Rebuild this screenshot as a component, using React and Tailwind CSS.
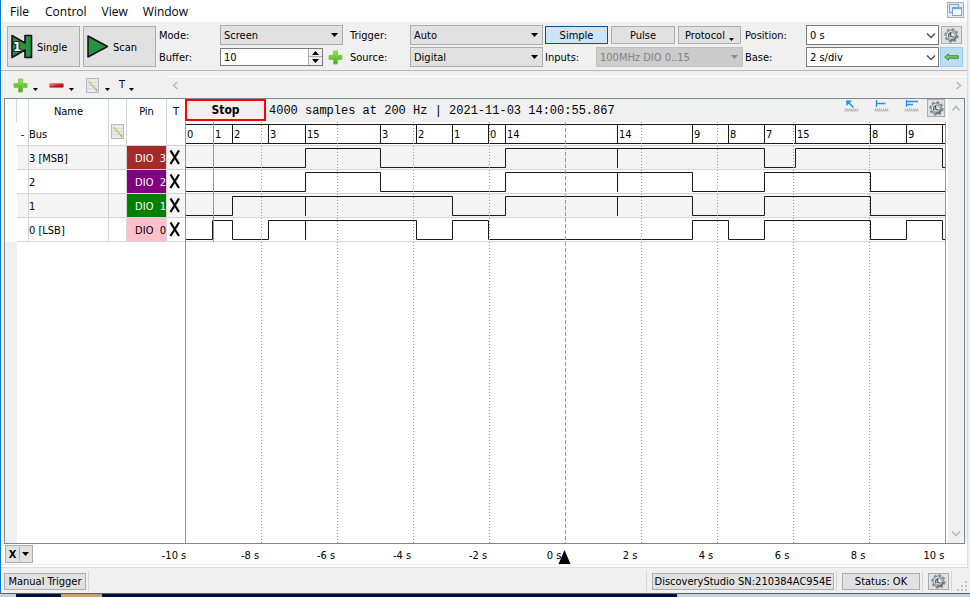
import React from "react";

const SPAN = 761;
const pct = (x) => `${(x / SPAN) * 100}%`;

const GRID = [76, 152, 228, 304, 456, 532, 608, 684];
const AXIS = ["-10 s", "-8 s", "-6 s", "-4 s", "-2 s", "0 s", "2 s", "4 s", "6 s", "8 s", "10 s"];
const BUS = [
  [0, "0"], [28, "1"], [47, "2"], [83, "3"], [120, "15"], [195, "3"], [231, "2"],
  [267, "1"], [303, "0"], [320, "14"], [432, "14"], [507, "9"], [543, "8"],
  [579, "7"], [610, "15"], [685, "8"], [721, "9"], [757, ""],
];
const SIGNALS = [
  { name: "3 [MSB]", pin: 3, cell: "bg-[#a52a2a] text-white", row: "bg-[#f4f4f4]", edges: [120, 195, 320, 579, 610, 757], ticks: [432] },
  { name: "2", pin: 2, cell: "bg-[#800080] text-white", row: "bg-white", edges: [120, 195, 320, 507, 579, 685], ticks: [432] },
  { name: "1", pin: 1, cell: "bg-[#008000] text-white", row: "bg-[#f4f4f4]", edges: [47, 267, 320, 507, 579, 685], ticks: [120, 432] },
  { name: "0 [LSB]", pin: 0, cell: "bg-[#ffc0cb] text-black", row: "bg-white", edges: [27, 47, 83, 231, 267, 303, 507, 543, 579, 685, 721, 757], ticks: [120] },
];

function wavePath(edges, ticks) {
  let y = 21.5;
  let d = `M0 ${y}`;
  edges.forEach((x) => {
    d += `H${x + 0.5}`;
    y = y === 21.5 ? 2.5 : 21.5;
    d += `V${y}`;
  });
  d += `H${SPAN}`;
  ticks.forEach((x) => {
    d += `M${x + 0.5} 2V22`;
  });
  return d;
}

function Caret({ className = "" }) {
  return (
    <svg className={className} width="7" height="4" viewBox="0 0 7 4" aria-hidden="true">
      <path d="M0 0H7L3.5 4Z" fill="currentColor" />
    </svg>
  );
}

function MiniCaret() {
  return (
    <svg className="mt-2 shrink-0" width="5" height="3" viewBox="0 0 5 3" aria-hidden="true">
      <path d="M0 0H5L2.5 3Z" fill="#000" />
    </svg>
  );
}

function Chevron({ dir, className = "" }) {
  const d = { left: "M7.5 2L3.5 5.5L7.5 9", right: "M2.5 2L6.5 5.5L2.5 9", up: "M1.5 7.5L5 3.5L8.5 7.5", down: "M1 3.5L5 7.5L9 3.5" }[dir];
  return (
    <svg className={className} width="10" height="11" viewBox="0 0 10 11" fill="none" stroke="currentColor" strokeWidth="1.5" aria-hidden="true">
      <path d={d} />
    </svg>
  );
}

function Plus() {
  return (
    <svg width="15" height="15" viewBox="0 0 15 15" aria-hidden="true">
      <defs>
        <linearGradient id="plusFill" x1="0" y1="0" x2="0" y2="1">
          <stop offset="0" stopColor="#9be35d" />
          <stop offset="1" stopColor="#43a818" />
        </linearGradient>
      </defs>
      <path d="M5.5 1H9.5V5.5H14V9.5H9.5V14H5.5V9.5H1V5.5H5.5Z" fill="url(#plusFill)" stroke="#7ccb4d" strokeWidth="1" strokeLinejoin="round" />
    </svg>
  );
}

function Minus() {
  return (
    <svg width="15" height="15" viewBox="0 0 15 15" aria-hidden="true">
      <defs>
        <linearGradient id="minusFill" x1="0" y1="0" x2="1" y2="1">
          <stop offset="0" stopColor="#f4a0a0" />
          <stop offset="0.5" stopColor="#d02020" />
          <stop offset="1" stopColor="#8e0808" />
        </linearGradient>
      </defs>
      <rect x="0.5" y="5.5" width="14" height="4" rx="1" fill="url(#minusFill)" stroke="#c86060" strokeWidth="0.6" />
    </svg>
  );
}

function Notepad() {
  return (
    <svg width="13" height="15" viewBox="0 0 13 15" aria-hidden="true">
      <rect x="0.5" y="0.5" width="12" height="14" fill="#e6ebf1" stroke="#b4b9c0" />
      <path d="M1 4.5H12M1 7.5H12M1 10.5H12" stroke="#d0dbe8" />
      <path d="M2.5 3L10 11.5" stroke="#e2c65a" strokeWidth="1.8" />
      <path d="M9.6 11L11 13" stroke="#9a8c66" strokeWidth="1.2" />
    </svg>
  );
}

function Gear() {
  return (
    <svg width="15" height="15" viewBox="0 0 15 15" aria-hidden="true">
      <g transform="translate(7.5 7.5)">
        <g fill="#87919a">
          {[0, 45, 90, 135].map((a) => (
            <rect key={a} x="-1.6" y="-7.2" width="3.2" height="14.4" rx="0.8" transform={`rotate(${a + 12})`} />
          ))}
        </g>
        <circle r="5.3" fill="#a9b1b7" stroke="#7d8790" strokeWidth="0.8" />
        <path d="M-3.9 2A4.4 4.4 0 0 1 0-4.3" fill="none" stroke="#dde3e6" strokeWidth="1.4" />
        <path d="M4.6 0.5A4.6 4.6 0 0 1-1 4.6" fill="none" stroke="#5b6770" strokeWidth="1.3" />
        <circle r="2.6" fill="#eceeef" />
        <path d="M-2.4 1.6A2.9 2.9 0 0 1-0.8-2.7V0.8L2 1.6" fill="none" stroke="#4d5860" strokeWidth="1.2" />
      </g>
    </svg>
  );
}

function Ruler({ kind }) {
  return (
    <svg width="15" height="14" viewBox="0 0 15 14" aria-hidden="true">
      <path d="M1.5 11V9.5M3.5 11V9.5M5.5 11V9.5M7.5 11V9.5M9.5 11V9.5M11.5 11V9.5M13.5 11V9.5" stroke="#aaa" />
      <rect x="0.5" y="10.5" width="14" height="2" fill="#c4c4c4" />
      {kind === "arrow" && (
        <g>
          <path d="M2 1.5H8L2.5 7Z" fill="#1e90ff" />
          <path d="M4 3L9.5 8.5" stroke="#1e90ff" strokeWidth="1.6" />
        </g>
      )}
      <g stroke="#1e90ff" fill="none">
        {kind === "one" && <path d="M2.5 1V8M3 4.5H11.5" strokeWidth="1.3" />}
        {kind === "two" && <path d="M2.5 1V8M3 2.5H14M3 5.5H9" strokeWidth="1.3" />}
      </g>
    </svg>
  );
}

function Combo({ label, value, className = "", flat = false, disabled = false }) {
  const skin = disabled
    ? "border-[#bfbfbf] bg-[#cccccc] text-[#838383]"
    : flat
      ? "border-[#7a7a7a] bg-white text-black"
      : "border-[#adadad] bg-[#e1e1e1] text-black";
  return (
    <div className={`relative h-5 ${className}`}>
      <select aria-label={label} disabled={disabled} className={`block h-5 w-full appearance-none rounded-none border pl-[3px] pt-0.5 opacity-100 ${skin}`}>
        <option>{value}</option>
      </select>
      {flat ? (
        <Chevron dir="down" className="pointer-events-none absolute right-[3px] top-[5px] text-[#555]" />
      ) : (
        <Caret className={`pointer-events-none absolute right-[5px] top-2 ${disabled ? "text-[#8c8c8c]" : "text-black"}`} />
      )}
    </div>
  );
}

const BTN = "flex items-center justify-center border border-[#adadad] bg-[#e1e1e1]";

function CaptureBar() {
  return (
    <div className="flex border-b border-[#b8b8b8] pt-0.5 pb-[3px] pl-[6px] pr-1">
      <button className="mt-px flex h-[41px] w-[73px] shrink-0 items-center gap-1 border border-[#adadad] bg-[#e1e1e1] pl-[3px]">
        <svg width="22" height="25" viewBox="0 0 22 25" aria-hidden="true">
          <path d="M1 1.5L14 9V1.5H20.5V23.5H14V16L1 23.5Z" fill="#249343" stroke="#111" strokeWidth="1.6" strokeLinejoin="round" />
          <text x="2" y="17" fontSize="13" fontWeight="bold" fontFamily="DejaVu Sans Condensed, sans-serif" fill="#fff" stroke="#222" strokeWidth="2" paintOrder="stroke">1</text>
        </svg>
        <span className="pt-0.5">Single</span>
      </button>
      <button className="ml-[3px] mt-px flex h-[41px] w-[73px] shrink-0 items-center gap-1 border border-[#adadad] bg-[#e1e1e1] pl-[3px]">
        <svg width="22" height="25" viewBox="0 0 22 25" aria-hidden="true">
          <path d="M1 2L20.5 12.5L1 23Z" fill="#249343" stroke="#111" strokeWidth="1.5" strokeLinejoin="round" />
        </svg>
        <span className="pt-0.5">Scan</span>
      </button>

      <div className="ml-[3px] grid w-[184px] grid-cols-[61px_123px] auto-rows-[20px] content-start gap-y-0.5">
        <span className="leading-[22px]">Mode:</span>
        <Combo label="Mode" value="Screen" />
        <label htmlFor="buffer" className="leading-[22px]">Buffer:</label>
        <div className="flex h-5 items-center gap-[5px]">
          <div className="relative h-[18px] w-[103px]">
            <input id="buffer" defaultValue="10" className="block h-[18px] w-full border border-[#7a7a7a] bg-white pl-[3px] pt-px" />
            <div className="absolute right-px top-px flex h-4 w-[14px] flex-col border-l border-[#adadad] bg-[#f0f0f0]">
              <button aria-label="Increase buffer" className="flex h-2 items-center justify-center border-b border-[#adadad]">
                <Caret className="rotate-180" />
              </button>
              <button aria-label="Decrease buffer" className="flex h-2 items-center justify-center">
                <Caret />
              </button>
            </div>
          </div>
          <button aria-label="Add buffer"><Plus /></button>
        </div>
      </div>

      <div className="ml-[7px] grid w-[193px] grid-cols-[60px_133px] auto-rows-[20px] content-start gap-y-0.5">
        <span className="leading-[22px]">Trigger:</span>
        <Combo label="Trigger" value="Auto" />
        <span className="leading-[22px]">Source:</span>
        <Combo label="Source" value="Digital" />
      </div>

      <div className="ml-0.5 flex w-[198px] flex-col gap-0.5">
        <div className="flex h-5 items-center gap-[3px]">
          <button className="h-[18px] w-[63px] border border-[#005499] bg-[#cce4f7] pt-0.5">Simple</button>
          <button className={`${BTN} h-[18px] w-16 pt-px`}>Pulse</button>
          <button className={`${BTN} h-[18px] w-[63px] gap-1 pt-px`}>Protocol<MiniCaret /></button>
        </div>
        <div className="flex h-5">
          <span className="w-[51px] leading-[22px]">Inputs:</span>
          <Combo label="Inputs" value="100MHz DIO 0..15" disabled className="flex-1" />
        </div>
      </div>

      <div className="ml-0.5 grid flex-1 grid-cols-[61px_minmax(0,1fr)_24px] auto-rows-[20px] content-start gap-y-0.5">
        <span className="leading-[22px]">Position:</span>
        <Combo label="Position" value="0 s" flat />
        <button aria-label="Position options" className={`${BTN} ml-[2px] mt-px h-[18px] w-[21px]`}><Gear /></button>
        <span className="leading-[22px]">Base:</span>
        <Combo label="Base" value="2 s/div" flat />
        <button aria-label="Reset base" className="ml-px flex h-5 w-[23px] items-center justify-center border border-[#99ccf0] bg-[#bcdcf4]">
          <svg width="15" height="8" viewBox="0 0 15 8" aria-hidden="true">
            <path d="M0.7 4L4.5 0.8V2.7H14.3V5.3H4.5V7.2Z" fill="#7cc36a" stroke="#2f8a35" strokeWidth="0.9" />
          </svg>
        </button>
      </div>
    </div>
  );
}

function ChannelBar() {
  return (
    <div className="flex h-[27px] items-stretch pt-[5px] pl-1 pr-0">
      <div className="flex w-[162px] items-center pb-1 pl-2">
        <button aria-label="Add channel" className="flex w-9 items-center gap-[5px]"><Plus /><MiniCaret /></button>
        <button aria-label="Remove channel" className="flex w-[37px] items-center gap-[5px]"><Minus /><MiniCaret /></button>
        <button aria-label="Edit channel" className="flex w-[33px] items-center gap-[6px]"><Notepad /><MiniCaret /></button>
        <button className="flex items-center gap-1">T<MiniCaret /></button>
      </div>
      <div className="flex flex-1 items-center justify-between border-t border-white px-[3px] pb-1 text-[#b8b8b8]">
        <button aria-label="Scroll left"><Chevron dir="left" /></button>
        <button aria-label="Scroll right"><Chevron dir="right" /></button>
      </div>
    </div>
  );
}

function ChannelTable() {
  const line = "border-[#d5d5d5]";
  return (
    <div className="flex w-[180px] shrink-0 flex-col bg-white">
      <table className="w-[180px] table-fixed border-separate border-spacing-0 [&_td]:p-0 [&_td]:pt-0.5 [&_th]:p-0 [&_th]:pt-0.5">
        <colgroup>
          <col className="w-[12px]" />
          <col className="w-[12px]" />
          <col className="w-[80px]" />
          <col className="w-[18px]" />
          <col className="w-[40px]" />
          <col className="w-[18px]" />
        </colgroup>
        <thead>
          <tr className="h-[23px] [&>th]:font-normal">
            <th className={`border-r ${line}`} />
            <th className={`border-r ${line}`} />
            <th className={`border-r ${line}`}>Name</th>
            <th className={`border-r ${line}`} />
            <th className={`border-r ${line}`}>Pin</th>
            <th>T</th>
          </tr>
        </thead>
        <tbody>
          <tr className="h-6">
            <td />
            <td className={`border-b border-r text-center ${line}`}>-</td>
            <td className={`border-b border-r ${line}`}>Bus</td>
            <td className={`border-b border-r ${line}`}>
              <button aria-label="Edit bus" className="mx-auto mb-[6px] block"><Notepad /></button>
            </td>
            <td className={`border-b border-r ${line}`} />
            <td className={`border-b ${line}`} />
          </tr>
          {SIGNALS.map((s) => (
            <tr key={s.pin} className="h-6">
              <td />
              <td className={`border-b border-r ${line} ${s.row}`} />
              <td className={`border-b border-r ${line} ${s.row}`}>{s.name}</td>
              <td className={`border-b border-r ${line} ${s.row}`} />
              <td className={`whitespace-pre border-b border-r text-right ${line} ${s.cell}`}>{`DIO  ${s.pin}`}</td>
              <td className={`border-b ${line} ${s.row}`}>
                <svg className="mb-0.5 ml-[2px] block" width="12" height="15" viewBox="0 0 12 15" aria-label="Don't care">
                  <path d="M1.5 0.5L10 14M10 0.5L1.5 14" stroke="#000" strokeWidth="2.2" />
                </svg>
              </td>
            </tr>
          ))}
        </tbody>
      </table>
      <div className="w-[12px] flex-1 bg-[#f0f0f0]" />
    </div>
  );
}

function Plot() {
  return (
    <div className="relative flex-1 bg-white">
      <div className="relative h-6 border-b border-[#d5d5d5]">
        <svg className="block h-6 w-full" viewBox="0 0 761 24" preserveAspectRatio="none" fill="none" stroke="#1a1a1a" aria-hidden="true">
          <path d={`M0 2.5H761M0 21.5H761${BUS.slice(1).map(([x]) => `M${x + 0.5} 2V22`).join("")}`} />
        </svg>
        {BUS.map(([x, text]) => (
          <span key={x} className="absolute top-1 pl-[2px] leading-[18px]" style={{ left: pct(x) }}>{text}</span>
        ))}
      </div>
      {SIGNALS.map((s) => (
        <div key={s.pin} className={`h-6 border-b border-[#d5d5d5] ${s.row}`}>
          <svg className="block h-6 w-full" viewBox="0 0 761 24" preserveAspectRatio="none" fill="none" stroke="#1a1a1a" aria-hidden="true">
            <path d={wavePath(s.edges, s.ticks)} />
          </svg>
        </div>
      ))}
      {GRID.map((x) => (
        <div key={x} className="absolute inset-y-0 w-px bg-[repeating-linear-gradient(to_bottom,#999_0_1px,transparent_1px_3px)]" style={{ left: pct(x) }} />
      ))}
      <div className="absolute inset-y-0 w-px bg-[repeating-linear-gradient(to_bottom,#999_0_4px,transparent_4px_6px)]" style={{ left: pct(380) }} />
      <div className="absolute top-0 h-[120px] w-px bg-[#999]" style={{ left: pct(28) }} />
      <div className="absolute inset-y-0 left-0 w-px bg-[#999]" />
      <div className="absolute inset-y-0 right-0 w-px bg-[#999]" />
    </div>
  );
}

function Scope() {
  return (
    <div className="ml-[3px] mr-0.5 flex flex-1 border border-[#828790]">
      <ChannelTable />
      <div className="flex flex-1 flex-col">
        <div className="flex h-[23px] items-start">
          <button className="h-[22px] w-[81px] border-2 border-[#ff0000] text-[12px] font-bold leading-4">Stop</button>
          <p className="ml-[3px] mt-1 flex-1 font-['Liberation_Mono',monospace] text-[12px] leading-4">4000 samples at 200 Hz | 2021-11-03 14:00:55.867</p>
          <div className="flex gap-[15px] pr-2">
            <button aria-label="Quick measure"><Ruler kind="arrow" /></button>
            <button aria-label="Pulse measure"><Ruler kind="one" /></button>
            <button aria-label="Edge measure"><Ruler kind="two" /></button>
          </div>
          <button aria-label="Plot options" className={`${BTN} mr-px h-[18px] w-[18px]`}><Gear /></button>
        </div>
        <Plot />
      </div>
      <div className="w-0.5 bg-white" />
      <div className="flex w-4 flex-col items-center justify-between py-1 text-[#b8b8b8]">
        <button aria-label="Scroll up"><Chevron dir="up" /></button>
        <button aria-label="Scroll down"><Chevron dir="down" /></button>
      </div>
    </div>
  );
}

function TimeAxis() {
  return (
    <div className="flex h-[21px] items-center border-b border-[#ececec] bg-white pl-1">
      <button className="flex h-[18px] w-7 shrink-0 items-center border border-[#adadad] bg-[#e1e1e1] font-bold">
        <span className="w-[14px] border-r border-[#adadad] pt-px text-center leading-[13px]">X</span>
        <Caret className="ml-[2px]" />
      </button>
      <div className="relative ml-[152px] mr-[21px] h-5 flex-1">
        {AXIS.map((t, i) => (
          <span key={t} className="absolute -ml-[31px] w-10 text-center leading-6" style={{ left: pct(i * 76) }}>{t}</span>
        ))}
        <svg className="absolute bottom-0 -ml-[7px]" width="13" height="14" viewBox="0 0 13 14" style={{ left: pct(380) }} aria-label="Trigger position">
          <path d="M6.5 0L12.5 14H0.5Z" fill="#000" />
        </svg>
      </div>
    </div>
  );
}

function StatusBar() {
  const rule = <span className="h-5 w-px bg-[#d5d5d5]" />;
  return (
    <div className="flex h-[25px] items-center bg-[#f0f0f0] pl-[3px]">
      <button className={`${BTN} mt-0.5 mr-0.5 h-[17px] w-[82px] pt-px`}>Manual Trigger</button>
      {rule}
      <div className="ml-auto flex items-center gap-[5px]">
        {rule}
        <button className={`${BTN} mt-0.5 -mr-[3px] h-[17px] w-[182px] pt-px`}>DiscoveryStudio SN:210384AC954E</button>
        {rule}
        <button className={`${BTN} mt-0.5 -mr-[3px] h-[17px] w-[78px] pt-px`}>Status: OK</button>
        {rule}
        <button aria-label="Device options" className={`${BTN} mt-0.5 -mr-[3px] h-[17px] w-[21px]`}><Gear /></button>
        {rule}
        <svg className="mt-3 mr-0.5" width="11" height="11" viewBox="0 0 11 11" fill="#bfbfbf" aria-hidden="true">
          <path d="M8 0h2v2h-2zM4 4h2v2h-2zM8 4h2v2h-2zM0 8h2v2h-2zM4 8h2v2h-2zM8 8h2v2h-2z" />
        </svg>
      </div>
    </div>
  );
}

export default function App() {
  return (
    <div className="flex min-h-screen flex-col bg-[#f0f0f0] font-['DejaVu_Sans_Condensed','DejaVu_Sans',sans-serif] text-[11px] leading-[14px] text-black">
      <div className="flex flex-1 flex-col border-b border-l border-[#0a78d0]">
        <div className="mr-0.5 flex flex-1 flex-col border-b border-r border-[#dcdcdc]">
          <nav className="flex h-[22px] items-center bg-white pl-[9px] pr-[3px] font-['Open_Sans',sans-serif] text-[12px]">
            <button className="mr-4 pt-0.5">File</button>
            <button className="mr-[15px] pt-0.5">Control</button>
            <button className="mr-[15px] pt-0.5">View</button>
            <button className="pt-0.5">Window</button>
            <button aria-label="Restore window" className="mb-0.5 ml-auto flex h-4 w-[17px] items-center justify-center border border-[#adadad] bg-[#e8e8e8]">
              <svg width="13" height="12" viewBox="0 0 13 12" aria-hidden="true">
                <rect x="0.5" y="0.5" width="9" height="8" fill="#dce9f8" stroke="#7ba3d6" />
                <rect x="3.5" y="3.5" width="9" height="8" fill="#f4f9ff" stroke="#7ba3d6" />
                <path d="M4 4.5H12" stroke="#7ba3d6" strokeWidth="1.4" />
              </svg>
            </button>
          </nav>
          <div className="h-px bg-[#f0f0f0]" />
          <main className="flex flex-1 flex-col">
            <CaptureBar />
            <ChannelBar />
            <Scope />
            <TimeAxis />
            <div className="h-0.5 bg-white" />
          </main>
        </div>
        <StatusBar />
      </div>
      <div className="flex h-[3px] bg-[#d0d0d0] pl-4">
        <div className="h-full w-[45px] bg-[#00102c]" />
        <div className="h-full w-[41px] bg-[#c4a27a]" />
        <div className="h-full w-[575px] bg-[#00102c]" />
      </div>
    </div>
  );
}
